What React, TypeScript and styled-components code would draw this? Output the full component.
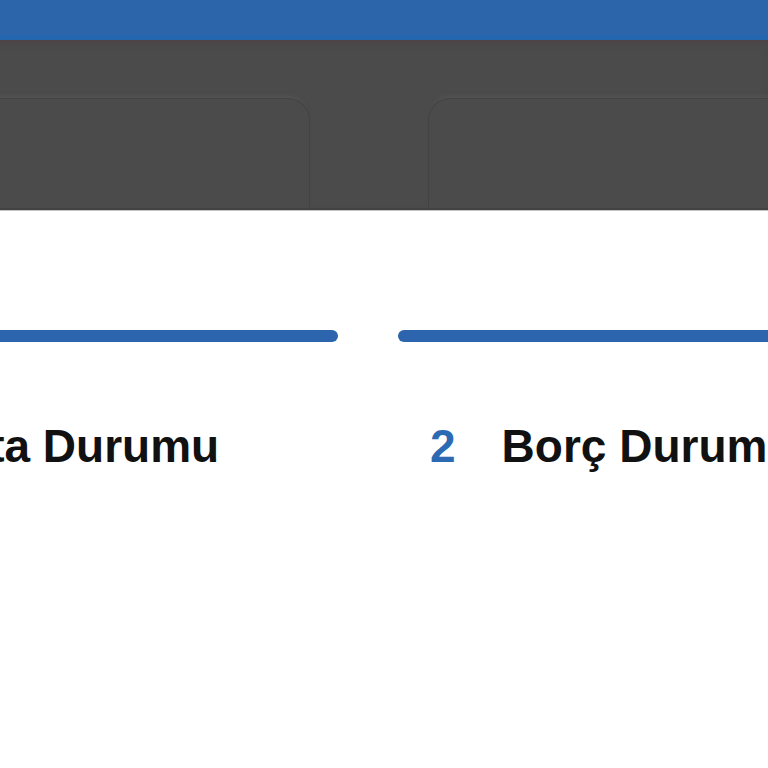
import React, { FC } from "react";
import styled, { createGlobalStyle } from "styled-components";

type Step = {
  number: number;
  title: string;
};

const steps: Step[] = [
  { number: 1, title: "Sigorta Durumu" },
  { number: 2, title: "Borç Durumu" },
];

const GlobalStyle = createGlobalStyle`
  html, body {
    margin: 0;
    padding: 0;
    background: #ffffff;
    overflow: hidden;
  }

  body {
    font-family: "Liberation Sans", Arial, sans-serif;
  }
`;

export const StepCard: FC<Step> = ({ number, title }) => (
  <StepColumn>
    <ProgressBar />
    <Label>
      <Number>{number}</Number>
      <Title>{title}</Title>
    </Label>
  </StepColumn>
);

const App: FC = () => (
  <>
    <GlobalStyle />
    <Page>
      <TopBar />
      <TabStrip>
        <Tab />
        <Tab />
      </TabStrip>
      <Steps>
        {steps.map((s) => (
          <StepCard key={s.number} {...s} />
        ))}
      </Steps>
    </Page>
  </>
);

export default App;

const Page = styled.div`
  width: 768px;
  height: 768px;
  overflow: hidden;
  background: #ffffff;
`;

const TopBar = styled.div`
  height: 35px;
  background: #2c65aa;
  border-bottom: 5px solid #2566b1;
`;

const TabStrip = styled.div`
  height: 168px;
  display: flex;
  align-items: flex-end;
  gap: 118px;
  margin-left: -190px;
  background: #4b4b4b;
  box-shadow: inset 0 4px 6px -2px rgba(80, 60, 70, 0.6);
  border-bottom: 2px solid #424242;
  position: relative;

  &::after {
    content: "";
    position: absolute;
    left: 0;
    right: 0;
    bottom: -3px;
    height: 1px;
    background: #c4c4c4;
  }
`;

const Tab = styled.div`
  flex: 0 0 500px;
  height: 110px;
  background: #4b4b4b;
  border: 1px solid #434343;
  border-bottom: none;
  border-radius: 22px 22px 0 0;
  box-sizing: border-box;
  box-shadow: 0 -6px 4px -4px rgba(90, 90, 90, 0.6);
`;

const Steps = styled.div`
  display: flex;
  gap: 60px;
  margin-left: -232px;
  padding-top: 120px;
`;

const StepColumn = styled.div`
  flex: 0 0 570px;
  display: flex;
  flex-direction: column;
`;

const ProgressBar = styled.div`
  height: 12px;
  border-radius: 6px;
  background: #2c65ae;
`;

const Label = styled.div`
  display: flex;
  align-items: baseline;
  gap: 46px;
  margin-top: 77px;
  padding-left: 32px;
  font-size: 46px;
  font-weight: 700;
  white-space: nowrap;
`;

const Number = styled.span`
  color: #2c6bb3;
`;

const Title = styled.span`
  color: #111111;
`;
